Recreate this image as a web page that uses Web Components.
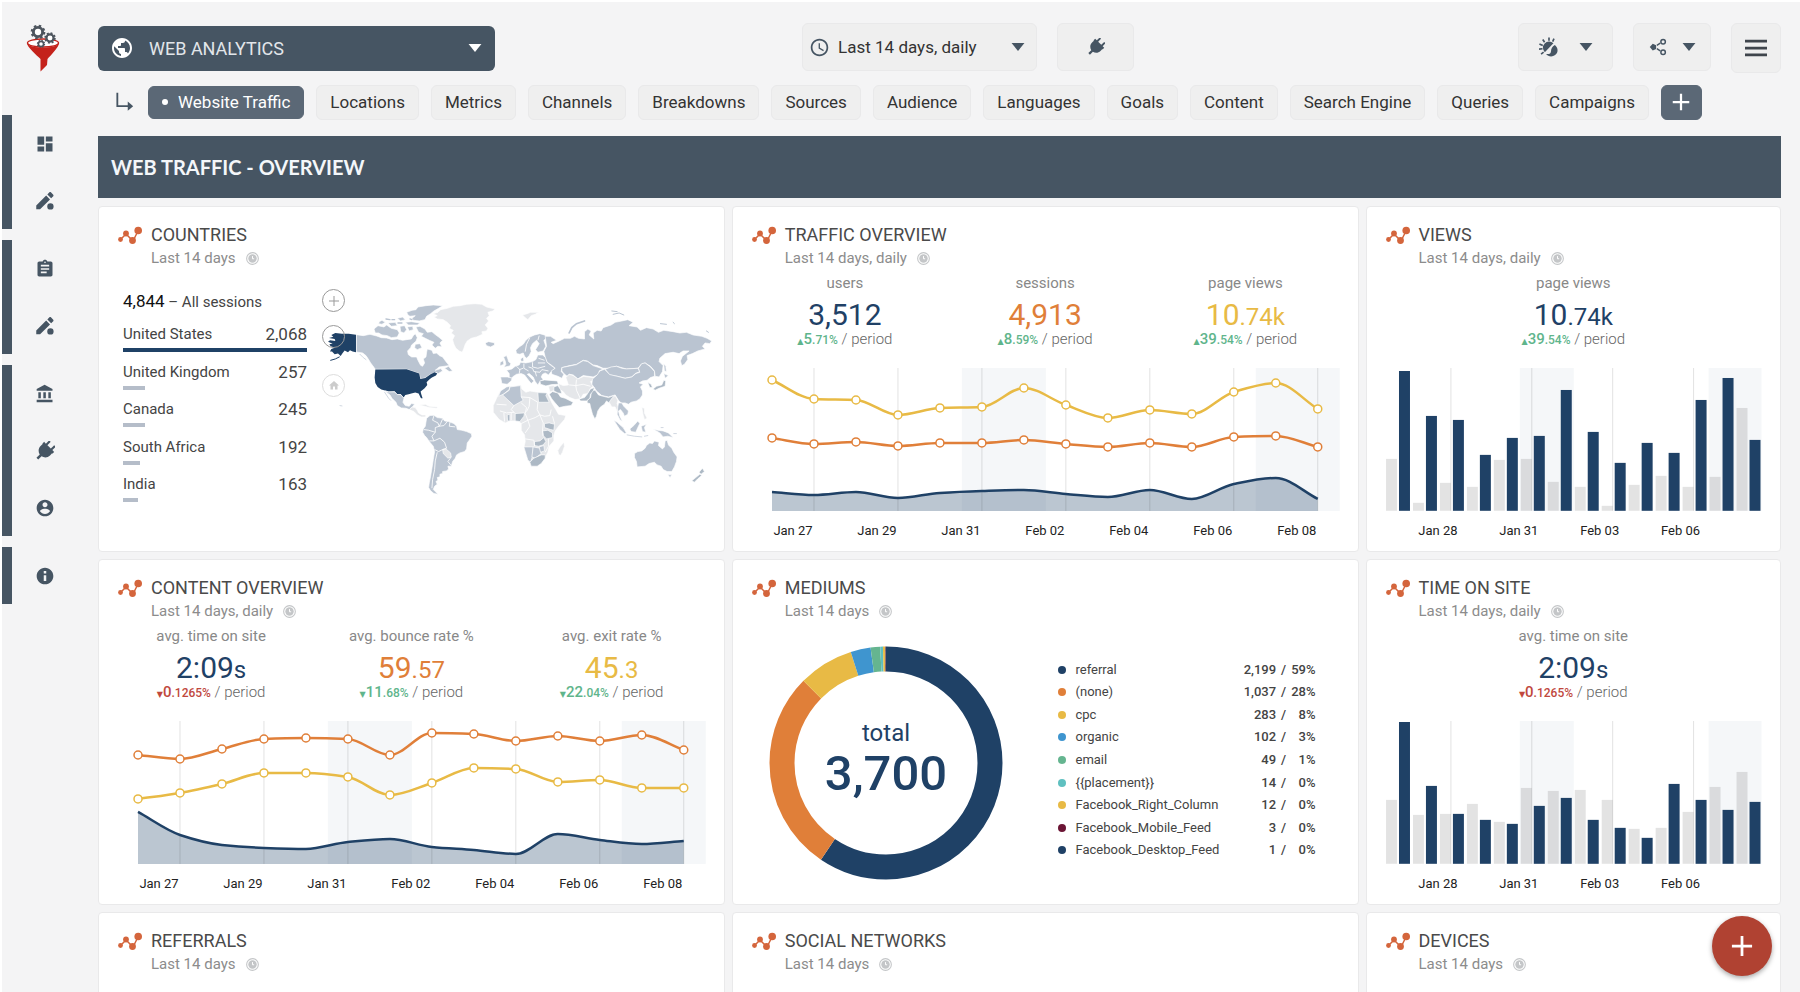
<!DOCTYPE html>
<html lang="en">
<head>
<meta charset="utf-8">
<title>Web Analytics</title>
<style>
  body {
    margin: 0;
    font-family: Roboto, "Liberation Sans", sans-serif;
    color: #444;
    background: #f4f4f5;
    --slate: #465563;
    --slate-soft: #5b6876;
    --navy: #1f4166;
    --orange: #e07f39;
    --yellow: #e8ba45;
    --green: #5fb58c;
    --red: #c0483d;
    --line: #e9e9ea;
  }
</style>
</head>
<body>
<app-shell>
  <side-bar slot="side"></side-bar>
  <top-bar slot="top"></top-bar>
  <tab-bar slot="top"></tab-bar>
  <page-banner>WEB TRAFFIC - OVERVIEW</page-banner>
  <card-grid>
    <dash-card heading="COUNTRIES" period="Last 14 days">
      <country-panel></country-panel>
    </dash-card>
    <dash-card heading="TRAFFIC OVERVIEW" period="Last 14 days, daily">
      <metric-row>
        <metric-stat label="users" value="3,512" color="navy" trend="up" change="5" fraction=".71%"></metric-stat>
        <metric-stat label="sessions" value="4,913" color="orange" trend="up" change="8" fraction=".59%"></metric-stat>
        <metric-stat label="page views" value="10" minor=".74k" color="yellow" trend="up" change="39" fraction=".54%"></metric-stat>
      </metric-row>
      <line-chart
        yellow="12,31,32,47,40,39,20,37,50,42,46,24,15,41"
        orange="70,76,74,78,75,75,72,76,79,75,79,69,68,79"
        area="124,127,124,130,125,123,122,126,129,122,131,116,110,131"></line-chart>
    </dash-card>
    <dash-card heading="VIEWS" period="Last 14 days, daily" narrow>
      <metric-row>
        <metric-stat label="page views" value="10" minor=".74k" color="navy" trend="up" change="39" fraction=".54%"></metric-stat>
      </metric-row>
      <bar-chart
        current="140,95,91,56,73,75,121,79,48,68,58,111,133,71"
        previous="52,8,28,24,51,52,29,24,5,26,35,24,34,103"></bar-chart>
    </dash-card>
    <dash-card heading="CONTENT OVERVIEW" period="Last 14 days, daily">
      <metric-row>
        <metric-stat label="avg. time on site" value="2:09" minor="s" color="navy" trend="down" bad change="0" fraction=".1265%"></metric-stat>
        <metric-stat label="avg. bounce rate %" value="59" minor=".57" color="orange" trend="down" change="11" fraction=".68%"></metric-stat>
        <metric-stat label="avg. exit rate %" value="45" minor=".3" color="yellow" trend="down" change="22" fraction=".04%"></metric-stat>
      </metric-row>
      <line-chart
        yellow="78,72,63,52,52,56,74,62,47,48,61,59,67,67"
        orange="34,38,28,18,17,18,34,12,13,20,15,20,14,29"
        area="91,114,124,127,128,121,118,126,129,133,113,119,123,120"></line-chart>
    </dash-card>
    <dash-card heading="MEDIUMS" period="Last 14 days">
      <medium-panel></medium-panel>
    </dash-card>
    <dash-card heading="TIME ON SITE" period="Last 14 days, daily" narrow>
      <metric-row>
        <metric-stat label="avg. time on site" value="2:09" minor="s" color="navy" trend="down" bad change="0" fraction=".1265%"></metric-stat>
      </metric-row>
      <bar-chart
        current="142,78,50,44,40,58,66,44,36,26,80,64,54,62"
        previous="64,49,50,60,42,76,73,74,64,35,36,52,77,92"></bar-chart>
    </dash-card>
    <dash-card heading="REFERRALS" period="Last 14 days"></dash-card>
    <dash-card heading="SOCIAL NETWORKS" period="Last 14 days"></dash-card>
    <dash-card heading="DEVICES" period="Last 14 days" narrow></dash-card>
  </card-grid>
  <fab-button slot="fab"></fab-button>
</app-shell>

<script>
const ICONS = {
  dashboard: '<path d="M3 13h8V3H3v10zm0 8h8v-6H3v6zm10 0h8V11h-8v10zm0-18v6h8V3h-8z"/>',
  edit: '<path d="M1.500 22v-4.600L13.400 5.500 18 10.100 6.100 22zM14.800 4.100l2.500-2.500c.5-.5 1.300-.5 1.800 0l2.800 2.800c.5.500.5 1.300 0 1.800l-2.500 2.500z"/><circle cx="18.500" cy="18.500" r="3.800"/>',
  assignment: '<path d="M19 3h-4.180C14.400 1.840 13.300 1 12 1c-1.300 0-2.400.84-2.820 2H5c-1.100 0-2 .9-2 2v14c0 1.100.9 2 2 2h14c1.100 0 2-.9 2-2V5c0-1.100-.9-2-2-2zm-7 0c.55 0 1 .45 1 1s-.45 1-1 1-1-.45-1-1 .45-1 1-1zm2 14H7v-2h7v2zm3-4H7v-2h10v2zm0-4H7V7h10v2z"/>',
  bank: '<path d="M4 10v7h3v-7H4zm6 0v7h3v-7h-3zM2 22h19v-3H2v3zm14-12v7h3v-7h-3zm-4.500-9L2 6v2h19V6l-9.500-5z"/>',
  plug: '<g transform="rotate(45 12 12)"><path d="M6.500.5c0-.8.6-1.300 1.300-1.300s1.300.5 1.300 1.300V5h5.800V.5c0-.8.6-1.300 1.300-1.300s1.300.5 1.300 1.300V5h3v3H20v3.500c0 4-2.700 7-6.500 7.900V25h-3v-5.600C6.700 18.500 4 15.500 4 11.500V8h-.5V5h3z"/></g>',
  user: '<path d="M12 2C6.480 2 2 6.480 2 12s4.480 10 10 10 10-4.480 10-10S17.520 2 12 2zm0 3c1.660 0 3 1.340 3 3s-1.340 3-3 3-3-1.340-3-3 1.340-3 3-3zm0 14.200c-2.500 0-4.710-1.280-6-3.220.03-1.990 4-3.080 6-3.080 1.990 0 5.970 1.090 6 3.080-1.290 1.940-3.500 3.220-6 3.220z"/>',
  info: '<path d="M12 2C6.480 2 2 6.480 2 12s4.480 10 10 10 10-4.480 10-10S17.520 2 12 2zm1.500 16h-3v-7h3v7zm0-9h-3V6h3v3z"/>',
  globe: '<path d="M12 2C6.480 2 2 6.480 2 12s4.480 10 10 10 10-4.480 10-10S17.520 2 12 2zm-1 17.930c-3.950-.49-7-3.850-7-7.930 0-.62.08-1.210.21-1.790L9 15v1c0 1.100.9 2 2 2v1.930zm6.900-2.540c-.26-.81-1-1.390-1.900-1.390h-1v-3c0-.55-.45-1-1-1H8v-2h2c.55 0 1-.45 1-1V7h2c1.100 0 2-.9 2-2v-.41c2.930 1.190 5 4.060 5 7.410 0 2.080-.8 3.970-2.100 5.390z"/>',
  clock: '<path d="M11.990 2C6.470 2 2 6.480 2 12s4.470 10 9.990 10C17.520 22 22 17.520 22 12S17.520 2 11.990 2zM12 20c-4.420 0-8-3.580-8-8s3.580-8 8-8 8 3.580 8 8-3.580 8-8 8zm.5-13H11v6l5.250 3.150.75-1.230-4.500-2.670z"/>',
  dial: '<circle cx="12" cy="12" r="10.800" fill="none" stroke="currentColor" stroke-width="2"/><circle cx="12" cy="12" r="7.800"/><path d="M12 7.500v5h3" fill="none" stroke="#fff" stroke-width="1.800"/>',
  caret: '<path d="M1 5h22L12 19z"/>',
  menu: '<path d="M0 3h24v3H0zM0 10.500h24v3H0zM0 18h24v3H0z"/>',
  plus: '<path d="M10.500 1h3v9.500H23v3h-9.500V23h-3v-9.500H1v-3h9.500z"/>',
  home: '<path d="M10 20v-6h4v6h5v-8h3L12 3 2 12h3v8z"/>',
  elbow: '<path d="M4 1v16h13" fill="none" stroke="currentColor" stroke-width="2.200"/><path d="M16.500 11.500L23 17l-6.500 5.500z"/>',
  theme: '<path d="M12 .5v4M4.500 3l2.200 3.300M18 2l-1.600 3.500M.5 8.500l4 1.800M0 14.500l4.200-.4M2.500 20.500l3-2.300" fill="none" stroke="currentColor" stroke-width="2"/><path d="M17.300 7.500A7.300 7.300 0 1 0 7 18.200z"/><path d="M19 9.500c4.300 3.300 4.300 9.300.3 12.200-3.600 2.700-8.500 1.800-10.800-1.300 4 .6 5.800-.9 5.900-3.400.1-3 1.400-5.500 4.600-7.500z"/>',
  share: '<path d="M1 12l4-4.200 4.500 1.700v5L5 16.700z"/><path d="M10.500 9.800l4.500-3M10.500 14.200l4.500 3" fill="none" stroke="currentColor" stroke-width="1.800"/><circle cx="18.800" cy="5" r="3" fill="none" stroke="currentColor" stroke-width="2"/><circle cx="18.800" cy="19" r="3" fill="none" stroke="currentColor" stroke-width="2"/>',
  trend: '<path d="M2.500 16.500L8 11l7 7L20.500 7" fill="none" stroke="currentColor" stroke-width="1.500"/><circle cx="2.500" cy="16.500" r="2.400"/><circle cx="8" cy="10.500" r="2.900"/><circle cx="14.500" cy="17.500" r="3.400"/><circle cx="20.200" cy="7.500" r="3.800"/>'
};

const svgIcon = (name, size) =>
  `<svg viewBox="0 0 24 24" width="${size}" height="${size}" fill="currentColor" aria-hidden="true">${ICONS[name]}</svg>`;

class BaseElement extends HTMLElement {
  constructor() {
    super();
    this.attachShadow({ mode: "open" });
  }
  attr(name) {
    return this.getAttribute(name) || "";
  }
  numbers(name) {
    return this.attr(name).split(",").map(Number);
  }
  connectedCallback() {
    this.shadowRoot.innerHTML = `<style>${this.getStyles()}</style>${this.getTemplate()}`;
  }
}

class AppShell extends BaseElement {
  getStyles() {
    return `
      :host {
        display: flex;
        box-sizing: border-box;
        height: 100vh;
        border-top: 2px solid #fff;
        border-left: 2px solid #fff;
      }
      main {
        flex: 1;
        min-width: 0;
        padding: 21px 19px 0 0;
        overflow-y: auto;
        scrollbar-width: none;
      }
    `;
  }
  getTemplate() {
    return `
      <slot name="side"></slot>
      <main>
        <slot name="top"></slot>
        <slot></slot>
      </main>
      <slot name="fab"></slot>
    `;
  }
}
customElements.define("app-shell", AppShell);

class SideBar extends BaseElement {
  getStyles() {
    return `
      :host {
        display: flex;
        flex-direction: column;
        gap: 11px;
        width: 96px;
        color: var(--slate);
      }
      .logo {
        display: block;
        height: 80px;
        padding: 22px 0 0 24px;
        box-sizing: border-box;
        margin-bottom: 22px;
      }
      .logo svg {
        display: block;
      }
      nav {
        display: flex;
        flex-direction: column;
        border-left: 10px solid var(--slate);
      }
      nav a {
        display: flex;
        align-items: center;
        justify-content: center;
        width: 65px;
        height: 57px;
        color: inherit;
      }
    `;
  }
  gear(x, y, r) {
    const dash = (2 * Math.PI * r) / 16;
    return `
      <circle cx="${x}" cy="${y}" r="${r}" fill="#fff" stroke="#4d555e" stroke-width="${r / 1.6}"/>
      <circle cx="${x}" cy="${y}" r="${r * 1.35}" fill="none" stroke="#4d555e" stroke-width="${r / 2}" stroke-dasharray="${dash * 1.35}"/>
    `;
  }
  getTemplate() {
    const groups = [
      [["dashboard", "Dashboards"], ["edit", "Edit dashboards"]],
      [["assignment", "Reports"], ["edit", "Edit reports"]],
      [["bank", "Organization"], ["plug", "Connections"], ["user", "Account"]],
      [["info", "Help"]]
    ];
    return `
      <a class="logo" href="#" aria-label="Home">
        <svg viewBox="0 0 34 48" width="34" height="48" aria-hidden="true">
          <ellipse cx="17" cy="19" rx="15.500" ry="4" fill="#fff" stroke="#c2241c" stroke-width="1.400"/>
          ${this.gear(12, 8, 4.6)}
          ${this.gear(24, 14, 3.6)}
          ${this.gear(15, 20, 2.6)}
          <path d="M1 19c2 3.500 8 4.500 16 4.500S31 22.500 33 19c0 4-8 12-11.500 16L21 41l-6.500 6.500V35C10.500 31 1 23 1 19z" fill="#c4221b"/>
        </svg>
      </a>
      ${groups.map(group => `
        <nav>
          ${group.map(([icon, label]) => `<a href="#" aria-label="${label}">${svgIcon(icon, 20)}</a>`).join("")}
        </nav>
      `).join("")}
    `;
  }
}
customElements.define("side-bar", SideBar);

class TopBar extends BaseElement {
  getStyles() {
    return `
      :host {
        display: grid;
        grid-template-columns: 397px 4fr auto 5fr auto;
        align-items: start;
        height: 50px;
        color: var(--slate);
      }
      .group {
        display: flex;
        gap: 20px;
      }
      .center {
        grid-column: 3;
      }
      .end {
        grid-column: 5;
      }
      .field {
        display: flex;
        align-items: center;
        box-sizing: border-box;
        border-radius: 6px;
      }
      .field svg {
        flex: none;
      }
      select {
        flex: 1;
        min-width: 0;
        padding: 0;
        border: 0;
        appearance: none;
        background: none;
        font: inherit;
        color: inherit;
      }
      .source {
        align-self: center;
        height: 45px;
        padding: 0 13px 0 12px;
        gap: 15px;
        background: var(--slate);
        color: #fff;
        font-size: 18px;
      }
      .source select {
        color: #e2e6ea;
      }
      .source option {
        color: #444;
      }
      .range {
        width: 235px;
        height: 48px;
        padding: 0 11px 0 6px;
        gap: 8px;
        font-size: 17px;
      }
      .range select {
        color: #333;
      }
      .range,
      button {
        background: #efefef;
        border: 1px solid var(--line);
      }
      button {
        display: flex;
        align-items: center;
        justify-content: center;
        box-sizing: border-box;
        height: 48px;
        padding: 0;
        border-radius: 6px;
        color: inherit;
      }
      .plug { width: 77px; }
      .theme { width: 95px; gap: 20px; }
      .share { width: 78px; gap: 15px; }
      .menu { width: 50px; height: 50px; color: #3f454c; }
    `;
  }
  getTemplate() {
    return `
      <label class="field source">
        ${svgIcon("globe", 24)}
        <select aria-label="Dashboard"><option>WEB ANALYTICS</option></select>
        ${svgIcon("caret", 14)}
      </label>
      <div class="group center">
        <label class="field range">
          ${svgIcon("clock", 21)}
          <select aria-label="Date range"><option>Last 14 days, daily</option></select>
          ${svgIcon("caret", 14)}
        </label>
        <button class="plug" type="button" aria-label="Connections">${svgIcon("plug", 18)}</button>
      </div>
      <div class="group end">
        <button class="theme" type="button" aria-label="Theme">${svgIcon("theme", 20)}${svgIcon("caret", 14)}</button>
        <button class="share" type="button" aria-label="Share">${svgIcon("share", 18)}${svgIcon("caret", 14)}</button>
        <button class="menu" type="button" aria-label="Menu">${svgIcon("menu", 22)}</button>
      </div>
    `;
  }
}
customElements.define("top-bar", TopBar);

class TabBar extends BaseElement {
  getStyles() {
    return `
      :host {
        display: block;
        margin: 11px 0 16px;
        font-size: 17px;
      }
      nav {
        display: flex;
        align-items: center;
        gap: 12px;
        padding-left: 16px;
        height: 36px;
      }
      .elbow {
        display: flex;
        width: 22px;
        color: var(--slate);
      }
      a,
      button {
        display: flex;
        align-items: center;
        box-sizing: border-box;
        height: 35px;
        padding: 0 13px;
        border: 1px solid var(--line);
        border-radius: 6px;
        background: #efefef;
        color: #333;
        font: inherit;
        text-decoration: none;
        white-space: nowrap;
      }
      .active {
        gap: 10px;
        height: 33px;
        background: var(--slate-soft);
        border-color: var(--slate-soft);
        color: #fff;
      }
      .active::before {
        content: "";
        width: 6px;
        height: 6px;
        border-radius: 50%;
        background: #fff;
      }
      button {
        justify-content: center;
        width: 41px;
        padding: 0;
        background: var(--slate-soft);
        border-color: var(--slate-soft);
        color: #fff;
      }
    `;
  }
  getTemplate() {
    const tabs = ["Website Traffic", "Locations", "Metrics", "Channels", "Breakdowns", "Sources", "Audience",
      "Languages", "Goals", "Content", "Search Engine", "Queries", "Campaigns"];
    return `
      <nav>
        <span class="elbow">${svgIcon("elbow", 20)}</span>
        ${tabs.map((tab, i) => `<a href="#" ${i === 0 ? 'class="active" aria-current="page"' : ""}>${tab}</a>`).join("")}
        <button type="button" aria-label="Add tab">${svgIcon("plus", 18)}</button>
      </nav>
    `;
  }
}
customElements.define("tab-bar", TabBar);

class PageBanner extends BaseElement {
  getStyles() {
    return `
      :host {
        display: flex;
        align-items: center;
        height: 62px;
        padding: 0 13px;
        margin-bottom: 8px;
        background: var(--slate);
      }
      h1 {
        margin: 0;
        font: 700 20px/24px Lato, sans-serif;
        color: #f4f7fa;
      }
    `;
  }
  getTemplate() {
    return `<h1><slot></slot></h1>`;
  }
}
customElements.define("page-banner", PageBanner);

class CardGrid extends BaseElement {
  getStyles() {
    return `
      :host {
        display: grid;
        grid-template-columns: repeat(8, minmax(0, 1fr));
        grid-auto-rows: minmax(346px, auto);
        gap: 7px;
      }
    `;
  }
  getTemplate() {
    return `<slot></slot>`;
  }
}
customElements.define("card-grid", CardGrid);

class DashCard extends BaseElement {
  getStyles() {
    return `
      :host {
        display: block;
        grid-column: span 3;
        box-sizing: border-box;
        border: 1px solid var(--line);
        border-radius: 4px;
        background: #fff;
      }
      :host([narrow]) {
        grid-column: span 2;
      }
      header {
        display: grid;
        grid-template-columns: 24px 1fr;
        column-gap: 9px;
        padding: 16px 19px 0;
      }
      .trend {
        display: flex;
        align-items: center;
        color: #d4653c;
      }
      h2 {
        margin: 0;
        font-size: 18px;
        font-weight: 400;
        line-height: 24px;
        color: #4a4a4a;
      }
      p {
        grid-column: 2;
        display: flex;
        align-items: center;
        gap: 10px;
        margin: 0;
        font-size: 15px;
        line-height: 22px;
        color: #8c8c8c;
      }
      p svg {
        color: #c4c6c8;
      }
    `;
  }
  getTemplate() {
    return `
      <header>
        <span class="trend">${svgIcon("trend", 24)}</span>
        <h2>${this.attr("heading")}</h2>
        <p>${this.attr("period")}${svgIcon("dial", 13)}</p>
      </header>
      <slot></slot>
    `;
  }
}
customElements.define("dash-card", DashCard);

class MetricRow extends BaseElement {
  getStyles() {
    return `
      :host {
        display: grid;
        grid-auto-flow: column;
        grid-auto-columns: 1fr;
        padding: 4px 12px 21px;
      }
    `;
  }
  getTemplate() {
    return `<slot></slot>`;
  }
}
customElements.define("metric-row", MetricRow);

class MetricStat extends BaseElement {
  getStyles() {
    return `
      :host {
        display: flex;
        flex-direction: column;
        align-items: center;
        color: #888;
      }
      .label {
        font-size: 15px;
        line-height: 20px;
      }
      .value {
        margin-top: 7px;
        font-size: 30px;
        line-height: 30px;
      }
      .value small {
        font-size: 24px;
      }
      .delta {
        height: 15px;
        font-size: 15px;
        line-height: 15px;
        font-weight: 300;
        color: #666;
      }
      .delta b {
        font-weight: 500;
        color: ${this.hasAttribute("bad") ? "var(--red)" : "var(--green)"};
      }
      .delta i {
        font: 8px/8px "DejaVu Sans", sans-serif;
      }
      .delta small {
        font-size: 12px;
      }
    `;
  }
  getTemplate() {
    const arrow = this.attr("trend") === "up" ? "▲" : "▼";
    return `
      <span class="label">${this.attr("label")}</span>
      <span class="value" style="color: var(--${this.attr("color")})">${this.attr("value")}<small>${this.attr("minor")}</small></span>
      <span class="delta"><b><i>${arrow}</i>${this.attr("change")}<small>${this.attr("fraction")}</small></b> / period</span>
    `;
  }
}
customElements.define("metric-stat", MetricStat);

const CHART_STYLES = `
  :host {
    display: block;
  }
  svg {
    display: block;
    width: 100%;
    overflow: visible;
  }
  text {
    font-size: 13px;
    text-anchor: middle;
    fill: #222;
  }
  .band {
    fill: #5a7896;
    fill-opacity: .06;
  }
  .grid {
    stroke: #000;
    stroke-opacity: .12;
  }
`;

class LineChart extends BaseElement {
  getStyles() {
    return `
      ${CHART_STYLES}
      :host { padding: 0 18px 0 39px; }
    `;
  }
  // monotone cubic interpolation through evenly spaced points
  curve(values) {
    const step = 42;
    const n = values.length;
    const slope = [];
    for (let i = 0; i < n - 1; i++) slope.push((values[i + 1] - values[i]) / step);
    const tangent = values.map((v, i) => {
      if (i === 0) return slope[0];
      if (i === n - 1) return slope[n - 2];
      const a = slope[i - 1];
      const b = slope[i];
      return a * b <= 0 ? 0 : (2 * a * b) / (a + b);
    });
    let d = `M0,${values[0]}`;
    for (let i = 1; i < n; i++) {
      const x = i * step;
      d += `C${x - 28},${values[i - 1] + tangent[i - 1] * 14} ${x - 14},${values[i] - tangent[i] * 14} ${x},${values[i]}`;
    }
    return d;
  }
  line(name) {
    const values = this.numbers(name);
    return `
      <path d="${this.curve(values)}" fill="none" stroke="var(--${name})" stroke-width="2.500"/>
      ${values.map((y, i) => `<circle cx="${i * 42}" cy="${y}" r="4" fill="#fff" stroke="var(--${name})" stroke-width="1.500"/>`).join("")}
    `;
  }
  getTemplate() {
    const labels = ["Jan 27", "Jan 29", "Jan 31", "Feb 02", "Feb 04", "Feb 06", "Feb 08"];
    const area = this.curve(this.numbers("area"));
    return `
      <svg viewBox="0 0 568 170" role="img" aria-label="Daily trend">
        <rect class="band" x="190" width="84" height="143"/>
        <rect class="band" x="484" width="84" height="143"/>
        <path d="${area}V143H0Z" fill="var(--navy)" fill-opacity=".3"/>
        ${labels.map((label, i) => `<path class="grid" d="M${42 + i * 84},0V143"/>`).join("")}
        <path d="${area}" fill="none" stroke="var(--navy)" stroke-width="2.500"/>
        ${this.line("orange")}
        ${this.line("yellow")}
        ${labels.map((label, i) => `<text x="${21 + i * 84}" y="167">${label}</text>`).join("")}
      </svg>
    `;
  }
}
customElements.define("line-chart", LineChart);

class BarChart extends BaseElement {
  getStyles() {
    return `
      ${CHART_STYLES}
      :host { padding: 0 19px; }
      .previous { fill: #000; fill-opacity: .11; }
      .current { fill: var(--navy); }
    `;
  }
  bars(name, offset) {
    return this.numbers(name)
      .map((h, i) => `<rect class="${name}" x="${offset + i * 27}" y="${143 - h}" width="11" height="${h}"/>`)
      .join("");
  }
  getTemplate() {
    const labels = ["Jan 28", "Jan 31", "Feb 03", "Feb 06"];
    return `
      <svg viewBox="0 0 376 170" role="img" aria-label="Daily comparison">
        <rect class="band" x="134" width="54" height="143"/>
        <rect class="band" x="323" width="53" height="143"/>
        ${labels.map((label, i) => `<path class="grid" d="M${65 + i * 81},0V143"/>`).join("")}
        ${this.bars("previous", 0)}
        ${this.bars("current", 13)}
        ${labels.map((label, i) => `<text x="${52 + i * 81}" y="167">${label}</text>`).join("")}
      </svg>
    `;
  }
}
customElements.define("bar-chart", BarChart);

class WorldMap extends BaseElement {
  getStyles() {
    return `
      :host {
        display: block;
        position: relative;
      }
      svg {
        display: block;
        width: 100%;
      }
      .land path { fill: #bac4d1; stroke: #fff; stroke-width: 2; stroke-linejoin: round; }
      .land .none { fill: #e5e7ea; }
      .land .mid { fill: #adb9c5; }
      .land .top { fill: var(--navy); stroke: none; }
      .borders { fill: none; stroke: #fff; stroke-width: 2.500; stroke-linejoin: round; }
      .thin { fill: none; stroke: #bac4d1; stroke-width: 3; stroke-linecap: round; }
      .zoom {
        position: absolute;
        top: 0;
        left: 2px;
        display: grid;
        gap: 13px;
      }
      button {
        display: flex;
        align-items: center;
        justify-content: center;
        box-sizing: border-box;
        width: 23px;
        height: 23px;
        padding: 0;
        border: 1px solid #999;
        border-radius: 50%;
        background: none;
        color: #999;
      }
      button svg {
        width: 12px;
      }
      .home {
        margin-top: 13px;
        border-color: #ddd;
        color: #ccc;
      }
    `;
  }
  getTemplate() {
    return `
      <svg viewBox="30 58 1200 640" role="img" aria-label="Sessions by country">
        <g class="land">
          <path d="M139,195L160,198L180,194L200,199L214,204L230,205L246,210L262,208L278,212L290,210L304,208L310,198L316,192L322,204L318,215L305,226L302,234L293,244L295,255L305,262L320,262L324,272L332,287L338,290L344,280L340,268L348,262L350,248L352,238L366,242L370,252L380,250L388,258L398,262L408,276L418,288L404,290L388,292L376,302L393,297L398,304L385,312L378,308L362,314L345,325L331,328L328,312L308,305L290,299L196,299L188,288L182,280L176,270L168,258L158,250L139,247Z"/>
          <path d="M290,128L306,122L318,120L324,112L348,108L370,106L398,108L386,116L372,124L362,132L350,140L345,150L328,154L310,152L306,146L316,138L300,140L294,136Z"/>
          <path d="M192,178L204,168L222,172L230,166L244,176L262,180L268,190L262,202L244,204L232,198L216,196L206,190L196,190Z"/>
          <path d="M318,172L330,170L345,178L352,188L366,186L375,194L386,202L398,212L390,220L396,232L384,230L376,236L366,226L372,218L358,212L346,206L334,200L340,192L326,188Z"/>
          <path d="M208,156L216,152L226,158L216,164L206,162Z"/>
          <path d="M234,160L256,158L262,168L244,170Z"/>
          <path d="M270,170L284,168L290,180L282,190L272,186Z"/>
          <path d="M292,172L308,170L310,180L298,184Z"/>
          <path d="M262,146L278,142L286,150L272,154Z"/>
          <path d="M286,158L304,156L330,160L322,166L296,166Z"/>
          <path d="M316,224L330,222L336,234L322,240L314,234Z"/>
          <path d="M404,296L416,290L428,304L418,306Z"/>
          <path class="none" d="M370,132L384,128L392,120L412,116L430,110L450,108L470,104L496,102L516,104L530,112L556,118L548,124L534,128L538,138L530,146L536,154L526,166L534,176L530,184L516,186L518,194L500,202L484,206L472,214L466,224L462,236L457,248L448,244L438,236L432,224L428,210L434,198L424,190L430,182L418,176L422,168L412,158L400,150L382,148L372,142L382,138Z"/>
          <path class="top" d="M57,205L70,201L64,196L76,190L96,192L116,192L138,195L138,248L128,246L120,242L114,248L104,243L98,250L92,259L84,252L74,254L66,246L60,246L64,238L74,234L62,230L58,224L68,222L54,216L60,212L76,214L74,208Z"/>
          <path class="top" d="M196,300L290,299L308,305L328,312L331,328L346,325L362,314L374,308L382,312L378,318L366,324L358,330L350,338L352,346L344,356L332,366L334,374L338,386L333,386L326,372L316,369L304,372L296,374L286,376L281,384L272,373L262,374L254,365L236,366L214,360L203,352L196,340L194,324Z"/>
          <path d="M226,364L236,367L254,367L262,375L272,375L282,386L279,398L286,408L298,410L304,402L314,403L308,412L298,420L288,416L274,415L262,408L258,398L246,386L240,376L232,370Z"/>
          <path class="none" d="M298,420L306,412L316,414L322,422L326,430L336,436L348,436L346,442L334,442L322,436L312,426Z"/>
          <path class="none" d="M328,406L346,404L358,410L384,412L380,416L358,414L344,410Z"/>
          <path d="M350,446L360,438L372,437L382,444L398,446L404,454L416,456L432,462L440,470L442,480L456,482L470,486L484,492L486,500L478,512L472,520L470,538L464,546L450,550L440,556L436,566L428,576L424,590L414,590L416,598L410,604L398,606L398,612L390,614L390,622L382,624L384,632L378,636L382,644L374,650L370,660L376,666L384,674L372,672L362,664L356,654L358,640L362,620L366,596L370,570L374,546L370,530L358,516L350,504L344,498L338,488L340,478L346,470L348,458Z"/>
          <path class="none" d="M398,540L408,538L422,550L424,562L414,566L400,552Z"/>
          <path d="M526,220L536,216L553,219L554,226L542,232L530,228Z"/>
          <path class="none" d="M638,136L652,132L662,128L686,128L676,134L664,138L654,150L646,144Z"/>
          <path d="M581,262L590,258L594,268L596,276L603,282L600,289L582,293L588,284L586,274Z"/>
          <path d="M571,278L580,273L582,284L570,289Z"/>
          <path d="M618,242L628,232L640,224L648,212L660,202L674,196L690,192L704,196L712,204L702,212L708,230L700,244L684,248L677,240L688,222L680,212L668,222L662,234L664,246L658,258L650,266L644,260L640,250L630,254L620,252Z"/>
          <path d="M632,268L640,262L642,274L634,276Z"/>
          <path d="M572,322L598,322L598,312L590,302L606,298L616,290L628,286L632,278L648,280L668,276L678,270L684,256L698,256L708,264L712,278L724,288L736,296L724,306L716,316L706,310L698,314L694,322L700,330L690,336L684,346L676,336L670,322L658,312L652,314L662,324L672,334L664,342L656,332L644,316L634,312L620,314L608,322L604,334L592,344L576,342Z"/>
          <path class="mid" d="M690,334L704,331L742,334L746,344L726,345L708,349L692,344Z"/>
          <path d="M706,200L722,200L740,212L724,218L730,222L748,214L764,206L782,206L794,200L806,206L824,208L824,186L834,178L844,184L838,196L852,208L850,190L862,182L874,184L880,174L904,166L916,158L936,154L954,150L970,158L958,168L982,172L992,182L1010,174L1030,178L1046,188L1062,182L1090,186L1110,190L1130,188L1150,196L1176,200L1192,206L1206,214L1200,222L1186,220L1178,230L1186,238L1164,244L1148,252L1132,258L1134,270L1124,284L1116,288L1112,274L1118,260L1138,244L1120,244L1108,252L1090,248L1066,252L1050,266L1048,276L1060,288L1058,306L1048,322L1036,320L1034,304L1022,290L1006,280L994,284L985,296L950,298L920,290L900,296L880,296L862,288L850,286L832,274L820,272L800,284L780,288L756,294L754,306L762,314L756,326L744,320L726,314L724,304L736,296L724,286L712,278L706,262L702,246L710,230Z"/>
          <path d="M756,294L780,289L800,285L820,273L834,276L850,288L880,298L868,304L868,314L850,322L820,318L804,328L790,316L778,314L772,320L762,312L756,304Z"/>
          <path class="none" d="M768,324L778,314L790,318L804,328L822,320L848,324L858,330L842,336L850,350L842,356L834,372L820,374L812,388L796,390L780,384L768,376L760,366L750,360L746,342L760,348L776,346Z"/>
          <path d="M886,299L904,292L920,290L936,296L950,298L985,296L990,306L976,312L966,322L946,326L922,320L900,316Z"/>
          <path d="M848,328L862,316L870,304L884,299L900,315L922,320L946,326L966,322L978,312L990,308L986,296L996,282L1006,280L1022,292L1034,306L1034,320L1022,324L1012,332L998,334L988,340L1000,344L992,352L998,364L998,376L990,388L980,394L964,398L956,404L946,400L934,400L926,392L916,376L896,382L876,378L860,364L852,352L846,344Z"/>
          <path class="mid" d="M846,362L856,362L866,376L880,380L896,384L914,378L906,392L898,400L890,394L884,404L872,412L864,424L860,440L855,448L848,434L842,412L840,402L832,400L832,392L842,384L844,372Z"/>
          <path class="mid" d="M808,388L824,384L832,374L842,358L854,354L850,364L842,374L840,386L830,394L812,394Z"/>
          <path class="none" d="M898,398L906,386L916,378L924,392L922,402L926,412L924,430L916,412L906,412Z"/>
          <path d="M926,400L936,400L942,410L956,424L954,434L944,440L940,430L932,420L926,424L930,440L938,456L930,450L922,434L924,412Z"/>
          <path d="M912,452L922,458L940,474L950,490L944,492L930,480Z"/>
          <path d="M960,478L972,468L984,454L990,462L984,474L978,488L964,486Z"/>
          <path d="M994,470L1010,464L1004,474L1008,488L998,486Z"/>
          <path d="M1030,478L1044,482L1060,484L1076,490L1090,504L1074,500L1060,502L1050,490Z"/>
          <path class="none" d="M996,414L1004,416L1004,430L1012,446L1004,450L1000,436Z"/>
          <path class="mid" d="M1014,338L1024,344L1028,354L1020,354Z"/>
          <path class="mid" d="M1030,358L1040,350L1056,346L1062,332L1068,334L1066,350L1048,356L1036,362Z"/>
          <path d="M1062,312L1076,318L1066,326Z"/>
          <path d="M1062,282L1068,290L1070,306L1064,304Z"/>
          <path d="M974,552L984,546L996,544L1006,536L1010,528L1020,520L1028,522L1034,514L1048,518L1046,528L1058,538L1064,532L1066,514L1072,512L1076,526L1086,536L1092,548L1102,562L1100,576L1094,592L1086,606L1072,606L1060,600L1054,590L1042,586L1034,578L1018,582L1006,590L982,592L980,576L974,564Z"/>
          <path d="M1074,616L1086,616L1081,624Z"/>
          <path class="mid" d="M1146,634L1158,624L1170,614L1176,618L1164,628L1154,638Z"/>
          <path class="mid" d="M1168,608L1178,596L1184,606L1174,614Z"/>
          <path class="none" d="M746,554L744,542L752,530L762,518L764,530L758,548L752,558Z"/>
          <path class="none" d="M570,366L582,360L596,350L634,348L636,358L648,368L660,364L684,368L712,370L720,386L726,400L738,420L746,434L768,438L764,450L748,468L736,484L732,498L732,514L718,530L714,548L706,564L694,582L682,590L664,590L654,570L642,534L646,516L644,496L634,482L634,462L624,454L600,454L586,460L568,450L550,428L550,408L560,386Z"/>
          <path d="M572,364L590,352L600,350L598,360L580,374L566,380Z"/>
          <path d="M578,376L598,362L600,352L632,348L634,382L640,392L612,408Z"/>
          <path class="mid" d="M684,369L712,370L708,378L718,398L686,398Z"/>
          <path class="mid" d="M616,432L644,430L642,440L630,456L616,454Z"/>
          <path class="mid" d="M592,436L600,434L600,454L593,454Z"/>
          <path class="mid" d="M704,462L718,460L734,464L732,482L722,480L704,474Z"/>
          <path class="mid" d="M698,484L714,482L728,490L728,504L710,508L700,498Z"/>
          <path class="mid" d="M674,516L690,514L702,504L708,516L700,526L686,530L674,528Z"/>
          <path d="M642,532L670,532L668,560L662,578L654,572Z"/>
          <path d="M670,532L690,536L694,552L676,566L666,562Z"/>
          <path class="mid" d="M660,578L672,566L694,556L706,556L706,566L694,582L682,590L664,590Z"/>
          <path d="M688,532L702,528L704,544L692,548Z"/>
          <path class="mid" d="M718,374L728,366L744,370L752,382L766,386L790,398L784,408L766,410L748,414L736,400L726,388Z"/>
          <path class="none" d="M716,350L732,348L738,360L720,368Z"/>
          <path class="mid" d="M732,352L744,348L752,360L756,372L744,370L732,364Z"/>
        </g>
        <g class="borders">
          <path d="M372,438L368,452L384,460L388,470L376,474L376,488M398,448L392,462L388,470L402,468L412,456M420,458L418,470L436,472M342,480L356,482L376,488L366,500L372,514L358,514M372,514L390,506L404,518L410,536L398,540L386,546L374,540M424,562L414,576L424,588M382,548L376,574L374,600L368,630L366,656"/>
          <path d="M660,204L650,224L646,246M688,198L684,212M620,290L630,300L628,312M642,282L642,296L656,304M668,278L668,292L684,296L706,290M656,292L668,296L672,306L690,308M640,296L628,300M686,266L704,272M594,322L608,326M676,306L680,320M690,308L696,300L716,304M684,280L706,280"/>
          <path d="M634,382L660,384L684,398M634,400L650,414L646,432M660,384L658,410L650,426M684,398L682,420L690,436L704,440M560,404L590,406M570,424L590,430L612,428M582,430L584,456M604,430L604,452M612,408L604,420L616,432M646,432L654,452L634,462M654,452L676,444L690,436L700,460M654,452L660,470L646,490M646,508L672,512L674,530M700,460L698,484L700,500M704,440L720,438L724,420M728,440L734,462M716,508L716,530L706,548"/>
          <path d="M798,348L800,362L812,388M798,348L820,344L842,350M800,330L798,348L778,346"/>
        </g>
        <path class="thin" d="M62,272L76,268L88,262" style="stroke:#1f4166"/>
        <path class="thin" d="M778,190L786,174L800,162L824,154" style="stroke-width:5"/>
        <path class="thin" d="M906,124L922,126M910,134L928,130L942,136M1052,162L1070,164M1090,158L1094,162M1190,184L1196,188"/>
        <path class="thin" d="M952,496L974,500L996,502M1004,500L1014,498M1092,492L1100,492M224,368L236,386L242,392M150,254L160,264L168,270M90,408L96,409M1060,474L1054,474" style="stroke-width:2"/>
        <path class="thin" d="M228,148L240,150M246,150L254,150M300,148L306,150M264,160L276,160" style="stroke-width:4"/>
      </svg>
      <div class="zoom">
        <button type="button" aria-label="Zoom in"><svg viewBox="0 0 12 12"><path d="M1,6H11M6,1V11" stroke="currentColor"/></svg></button>
        <button type="button" aria-label="Zoom out"></button>
        <button type="button" class="home" aria-label="Reset map">${svgIcon("home", 13)}</button>
      </div>
    `;
  }
}
customElements.define("world-map", WorldMap);

class CountryPanel extends BaseElement {
  getStyles() {
    return `
      :host {
        display: grid;
        grid-template-columns: 184px minmax(0, 1fr);
        column-gap: 13px;
        padding: 20px 4px 0 24px;
      }
      .summary {
        margin: 0 0 7px;
        font-size: 15px;
        line-height: 25px;
      }
      .summary b {
        font-size: 17px;
        font-weight: 400;
        color: #111;
      }
      ul {
        display: grid;
        grid-auto-rows: 1fr;
        height: 188px;
        margin: 0;
        padding: 0;
        list-style: none;
      }
      li {
        display: grid;
        grid-template-columns: 1fr auto;
        align-content: start;
        align-items: center;
        font-size: 15px;
        line-height: 24px;
      }
      .count {
        font-size: 17px;
      }
      .bar {
        grid-column: span 2;
        height: 4px;
        margin-top: 2px;
        background: #b5bdc9;
      }
      li:first-child .bar {
        background: var(--navy);
      }
    `;
  }
  getTemplate() {
    const rows = [["United States", 2068], ["United Kingdom", 257], ["Canada", 245], ["South Africa", 192], ["India", 163]];
    return `
      <div>
        <p class="summary"><b>4,844</b> – All sessions</p>
        <ul>
          ${rows.map(([name, count]) => `
            <li>
              <span>${name}</span>
              <span class="count">${count.toLocaleString("en-US")}</span>
              <span class="bar" style="width: ${Math.round((count / rows[0][1]) * 100)}%"></span>
            </li>
          `).join("")}
        </ul>
      </div>
      <world-map></world-map>
    `;
  }
}
customElements.define("country-panel", CountryPanel);

class MediumPanel extends BaseElement {
  getStyles() {
    return `
      :host {
        display: flex;
        justify-content: space-between;
        align-items: center;
        padding: 24px 42px 0 36px;
      }
      .donut {
        flex: none;
        width: 234px;
      }
      .total {
        font-size: 24px;
        text-anchor: middle;
        fill: var(--navy);
      }
      .sum {
        font-size: 49px;
        font-weight: 500;
        text-anchor: middle;
        fill: var(--navy);
      }
      table {
        width: 258px;
        height: 203px;
        border-collapse: collapse;
        font-size: 13px;
        line-height: 20px;
        margin-bottom: 6px;
      }
      th,
      td {
        padding: 0;
        text-align: right;
        font-weight: 500;
        color: #444;
      }
      th {
        text-align: left;
        font-weight: 400;
      }
      th i {
        display: inline-block;
        width: 8px;
        height: 8px;
        margin-right: 10px;
        border-radius: 50%;
      }
      .slash {
        width: 15px;
        text-align: center;
      }
      .share {
        width: 22px;
      }
    `;
  }
  getTemplate() {
    const rows = [
      ["referral", 2199, 59, "#1f4166"],
      ["(none)", 1037, 28, "#e07f39"],
      ["cpc", 283, 8, "#e8ba45"],
      ["organic", 102, 3, "#3f95cf"],
      ["email", 49, 1, "#65b590"],
      ["{{placement}}", 14, 0, "#5fc0c0"],
      ["Facebook_Right_Column", 12, 0, "#e8ba45"],
      ["Facebook_Mobile_Feed", 3, 0, "#6b1535"],
      ["Facebook_Desktop_Feed", 1, 0, "#1f4166"]
    ];
    let start = 0;
    const arcs = rows.map(([, count, , color]) => {
      const arc = `<circle cx="117" cy="117" r="104" pathLength="3700" fill="none" stroke="${color}" stroke-width="25"
        stroke-dasharray="${count} 3700" stroke-dashoffset="${-start}" transform="rotate(-90 117 117)"/>`;
      start += count;
      return arc;
    });
    return `
      <svg class="donut" viewBox="0 0 234 234" role="img" aria-label="Sessions by medium">
        ${arcs.join("")}
        <text class="total" x="117" y="95">total</text>
        <text class="sum" x="117" y="144">3,700</text>
      </svg>
      <table>
        <tbody>
          ${rows.map(([name, count, share, color]) => `
            <tr>
              <th scope="row"><i style="background: ${color}"></i>${name}</th>
              <td>${count.toLocaleString("en-US")}</td>
              <td class="slash">/</td>
              <td class="share">${share}%</td>
            </tr>
          `).join("")}
        </tbody>
      </table>
    `;
  }
}
customElements.define("medium-panel", MediumPanel);

class FabButton extends BaseElement {
  getStyles() {
    return `
      :host {
        position: fixed;
        right: 28px;
        bottom: 16px;
      }
      button {
        display: flex;
        align-items: center;
        justify-content: center;
        width: 60px;
        height: 60px;
        padding: 0;
        border: 0;
        border-radius: 50%;
        background: #b04232;
        box-shadow: 0 2px 5px rgba(0, 0, 0, .35);
        color: #fff;
      }
    `;
  }
  getTemplate() {
    return `<button type="button" aria-label="Add widget">${svgIcon("plus", 22)}</button>`;
  }
}
customElements.define("fab-button", FabButton);
</script>
</body>
</html>
